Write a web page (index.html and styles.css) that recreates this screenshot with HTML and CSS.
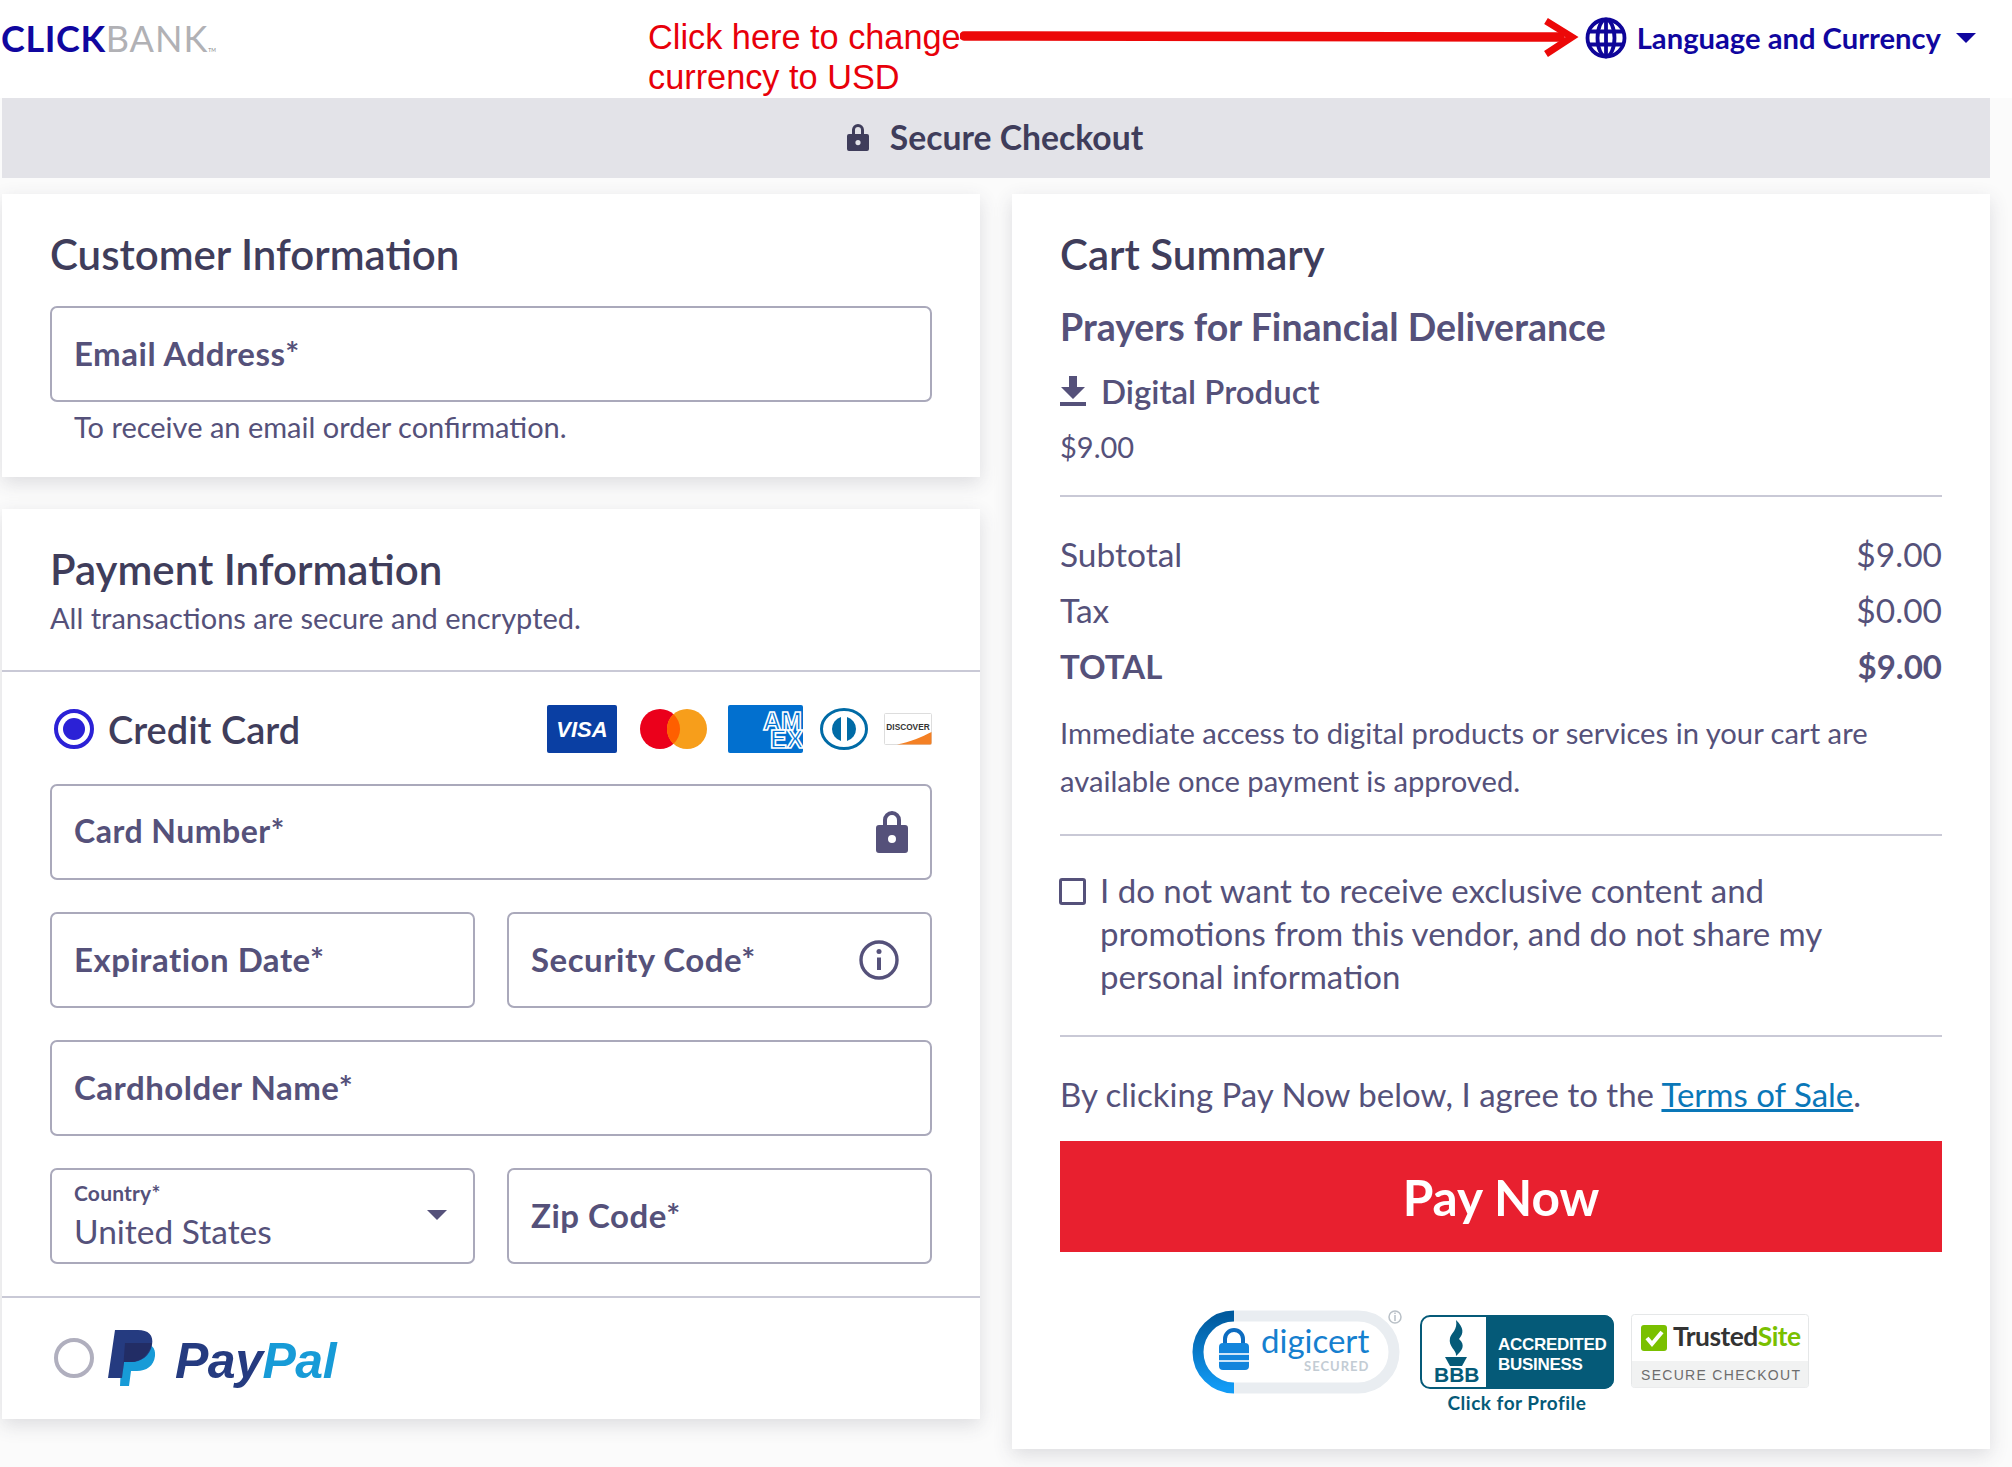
FILE: index.html
```html
<!DOCTYPE html>
<html lang="en">
<head>
<meta charset="utf-8">
<title>ClickBank Secure Checkout</title>
<link rel="stylesheet" href="styles.css">
</head>
<body>
<div class="page">
  <header class="topbar">
    <div class="logo"><span class="logo-click">CLICK</span><span class="logo-bank">BANK</span><span class="logo-tm">TM</span></div>
    <div class="note">Click here to change<br>currency to USD</div>
    <svg class="note-arrow" width="632" height="46" viewBox="0 0 632 46"><path d="M4 22 L600 23" stroke="#ec0808" stroke-width="9.500" stroke-linecap="round" fill="none"/><path d="M586 7 L612 23 L586 40" stroke="#ec0808" stroke-width="7" fill="none"/></svg>
    <div class="lang">
      <svg class="globe" width="42" height="42" viewBox="0 0 42 42" fill="none" stroke="#0f0599" stroke-width="3.800"><circle cx="21" cy="21" r="18.500"/><ellipse cx="21" cy="21" rx="8.500" ry="18.500"/><path d="M21 2.500V39.500M3.500 14.500H38.500M3.500 27.500H38.500"/></svg>
      <span class="lang-text">Language and Currency</span>
      <span class="lang-caret"></span>
    </div>
  </header>
  <div class="banner">
    <svg width="24" height="29" viewBox="0 0 24 29"><path fill="#3f3d5b" fill-rule="evenodd" d="M6 11V7a6 6 0 0 1 12 0v4h3a2 2 0 0 1 2 2v13a2 2 0 0 1-2 2H3a2 2 0 0 1-2-2V13a2 2 0 0 1 2-2zm3 0h6V7a3 3 0 0 0-6 0zm3 6a2.600 2.600 0 1 0 0 5.200a2.600 2.600 0 0 0 0-5.200z"/></svg>
    <span>Secure Checkout</span>
  </div>
  <main class="columns">
    <div class="col-left">
      <section class="card card-customer">
        <h2>Customer Information</h2>
        <div class="field field-email"><span>Email Address*</span></div>
        <p class="hint">To receive an email order confirmation.</p>
      </section>
      <section class="card card-payment">
        <div class="pay-head">
          <h2>Payment Information</h2>
          <p class="sub">All transactions are secure and encrypted.</p>
        </div>
        <div class="pay-body">
          <div class="method">
            <span class="radio radio-on"></span>
            <span class="method-label">Credit Card</span>
            <div class="brands">
              <svg class="b-visa" width="70" height="48" viewBox="0 0 70 48"><rect width="70" height="48" rx="2" fill="#0a3fa3"/><text x="35" y="32" class="t-visa">VISA</text></svg>
              <svg class="b-mc" width="67" height="40" viewBox="0 0 67 40"><circle cx="20" cy="20" r="20" fill="#eb001b"/><circle cx="47" cy="20" r="20" fill="#f79e1b"/><path d="M33.500 5.200a20 20 0 0 1 0 29.600a20 20 0 0 1 0-29.600z" fill="#ff5f00"/></svg>
              <svg class="b-amex" width="75" height="48" viewBox="0 0 75 48"><rect width="75" height="48" rx="2" fill="#0270cf"/><text x="35" y="25" class="t-amex">AM</text><text x="42" y="43" class="t-amex">EX</text></svg>
              <svg class="b-diners" width="48" height="42" viewBox="0 0 48 42"><ellipse cx="24" cy="21" rx="22.500" ry="19.500" fill="#fff" stroke="#006ba6" stroke-width="3"/><path d="M21 9a12.500 12.500 0 0 0 0 24zM27 9a12.500 12.500 0 0 1 0 24z" fill="#006ba6"/></svg>
              <svg class="b-disc" width="48" height="32" viewBox="0 0 48 32"><rect x=".5" y=".5" width="47" height="31" rx="1" fill="#fff" stroke="#ddd"/><path d="M13 31.500C26 29 38 24 47.500 19V30a1.500 1.500 0 0 1-1.500 1.500z" fill="#f48024"/><text x="24" y="17" class="t-disc">DISCOVER</text></svg>
            </div>
          </div>
          <div class="form-grid">
            <div class="field span2 field-small"><span>Card Number*</span>
              <svg class="field-icon" width="32" height="42" viewBox="0 0 32 42"><path fill="#55517a" fill-rule="evenodd" d="M7 14V9a9 9 0 0 1 18 0v5h4a3 3 0 0 1 3 3v22a3 3 0 0 1-3 3H3a3 3 0 0 1-3-3V17a3 3 0 0 1 3-3zm4 0h10V9a5 5 0 0 0-10 0zm5 10a4 4 0 1 0 0 8a4 4 0 0 0 0-8z"/></svg>
            </div>
            <div class="field"><span>Expiration Date*</span></div>
            <div class="field"><span>Security Code*</span>
              <svg class="field-icon info" width="40" height="40" viewBox="0 0 40 40" fill="none"><circle cx="20" cy="20" r="18" stroke="#55517a" stroke-width="3.400"/><path d="M20 17.500V30" stroke="#55517a" stroke-width="4"/><circle cx="20" cy="11.500" r="2.500" fill="#55517a"/></svg>
            </div>
            <div class="field span2"><span>Cardholder Name*</span></div>
            <div class="field field-select">
              <div class="select-text"><small>Country*</small><b>United States</b></div>
              <span class="select-caret"></span>
            </div>
            <div class="field"><span>Zip Code*</span></div>
          </div>
        </div>
        <div class="paypal-row">
          <span class="radio"></span>
          <svg class="pp-mark" width="48" height="56" viewBox="0 0 48 56"><path d="M14 13h20c9 0 14 5 13 13c-1 10-9 15-18 15h-6l-2 15H12z" fill="#179bd7"/><path d="M7 0h23c10 0 16 5 14 15c-2 11-11 17-21 17h-7l-2 16H0z" fill="#253b80"/><path d="M17 13h27c-2 11-11 19-21 19h-7l-1 8z" fill="#222d65"/></svg>
          <span class="pp-word"><i class="pp-pay">Pay</i><i class="pp-pal">Pal</i></span>
        </div>
      </section>
    </div>
    <section class="card card-cart">
      <h2>Cart Summary</h2>
      <h3>Prayers for Financial Deliverance</h3>
      <div class="digital">
        <svg width="26" height="30" viewBox="0 0 26 30"><path fill="#55517a" d="M9 0h8v11h8L13 23L1 11h8zM0 26h26v4H0z"/></svg>
        <span>Digital Product</span>
      </div>
      <p class="price">$9.00</p>
      <hr class="rule rule-a">
      <div class="line"><span>Subtotal</span><span>$9.00</span></div>
      <div class="line"><span>Tax</span><span>$0.00</span></div>
      <div class="line line-total"><span>TOTAL</span><span>$9.00</span></div>
      <p class="access">Immediate access to digital products or services in your cart are available once payment is approved.</p>
      <hr class="rule rule-b">
      <div class="optout">
        <span class="checkbox"></span>
        <p>I do not want to receive exclusive content and promotions from this vendor, and do not share my personal information</p>
      </div>
      <hr class="rule rule-c">
      <p class="terms">By clicking Pay Now below, I agree to the <a href="#">Terms of Sale</a>.</p>
      <button class="pay" type="button">Pay Now</button>
      <div class="badges">
        <svg class="badge-digi" width="212" height="84" viewBox="0 0 212 84">
          <defs><linearGradient id="digiring" x1="0" y1="0" x2="0" y2="1"><stop offset="0" stop-color="#005a9e"/><stop offset="1" stop-color="#129bf5"/></linearGradient></defs>
          <path d="M42 6H166a36 36 0 0 1 0 72H42" fill="none" stroke="#e9edf1" stroke-width="11"/>
          <path d="M42 6A36 36 0 0 0 42 78" fill="none" stroke="url(#digiring)" stroke-width="11"/>
          <path d="M33 33v-4a9 9 0 0 1 18 0v4" fill="none" stroke="#0d6cc0" stroke-width="4"/>
          <rect x="27" y="33" width="30" height="27" rx="4" fill="#1285dc"/>
          <path d="M27 44h30M27 51h30" stroke="#cfe6f8" stroke-width="2"/>
          <text x="69" y="43" class="t-digi">digicert</text>
          <text x="112" y="61" class="t-secured">SECURED</text>
          <circle cx="203" cy="7" r="6" fill="#fff" stroke="#b9c0c7" stroke-width="1.500"/><path d="M203 5v6M203 2.500v1.500" stroke="#b9c0c7" stroke-width="1.500"/>
        </svg>
        <div class="bbb">
          <svg width="194" height="74" viewBox="0 0 194 74">
            <rect x="1" y="1" width="192" height="72" rx="9" fill="#fff" stroke="#055a78" stroke-width="2"/>
            <path d="M66 0h118a10 10 0 0 1 10 10v54a10 10 0 0 1-10 10H66z" fill="#055a78"/>
            <path d="M36 5c8 8 8 13 3 19c7 6 3 12-3 17c1-6-8-9-6-18c1-5 8-8 6-18z" fill="#055a78"/>
            <path d="M25 42h22l-5 9h-12z" fill="#055a78"/>
            <text x="14" y="67" class="t-bbb">BBB</text>
            <text x="78" y="35" class="t-acc">ACCREDITED</text>
            <text x="78" y="55" class="t-acc">BUSINESS</text>
          </svg>
          <span>Click for Profile</span>
        </div>
        <svg class="badge-trust" width="178" height="74" viewBox="0 0 178 74">
          <rect x=".5" y=".5" width="177" height="73" rx="3" fill="#fff" stroke="#e5e7e8"/>
          <path d="M1 47h176v24a2.500 2.500 0 0 1-2.500 2.500H3.500A2.500 2.500 0 0 1 1 71z" fill="#f1f2f2"/>
          <rect x="10" y="11" width="26" height="26" rx="3" fill="#7ac000"/>
          <path d="M16 24l5 6l10-12" fill="none" stroke="#fff" stroke-width="4"/>
          <text x="42" y="32" class="t-trust">Trusted<tspan class="t-site">Site</tspan></text>
          <text x="10" y="66" class="t-check">SECURE CHECKOUT</text>
        </svg>
      </div>
    </section>
  </main>
</div>
</body>
</html>
```
FILE: styles.css
```css
* { box-sizing: border-box; }
html, body { margin: 0; padding: 0; }
body {
  background: #fbfbfb;
  font-family: "Lato", "Noto Sans", sans-serif;
  color: #55517a;
  width: 2012px;
  height: 1467px;
  overflow: hidden;
}
.page { width: 2012px; padding: 0 22px 0 2px; position: relative; }
p, h2, h3 { margin: 0; }

.topbar {
  height: 98px;
  margin-left: -2px;
  margin-right: -22px;
  background: #fff;
  display: flex;
  justify-content: space-between;
  align-items: flex-start;
  position: relative;
}
.logo { margin: 19px 0 0 1px; font-size: 36px; line-height: 38px; display: flex; font-family: "Lato", sans-serif; }
.logo-click { color: #10069f; font-weight: 700; letter-spacing: 0.6px; }
.logo-bank { color: #b1b1b5; font-weight: 400; letter-spacing: 1px; }
.logo-tm { color: #888; font-size: 5px; align-self: flex-end; line-height: 14px; letter-spacing: 0; }
.note {
  position: absolute;
  left: 648px;
  top: 17px;
  font-family: "Liberation Sans", Arial, sans-serif;
  font-size: 34.300px;
  line-height: 40px;
  color: #e8000a;
}
.note-arrow { position: absolute; left: 960px; top: 14px; }
.lang { display: flex; align-items: center; margin: 17px 36px 0 0; }
.globe { margin-right: 10px; }
.lang-text { color: #10069f; font-size: 29.200px; font-weight: 700; line-height: 42px; }
.lang-caret {
  width: 0; height: 0; margin-left: 15px;
  border-left: 10px solid transparent;
  border-right: 10px solid transparent;
  border-top: 10px solid #10069f;
}

.banner {
  height: 80px;
  background: #e3e3e8;
  display: flex;
  align-items: center;
  justify-content: center;
  gap: 20px;
  font-size: 33.700px;
  font-weight: 700;
  color: #3f3d5b;
  padding: 0 3px 2px 0;
}

.columns {
  display: grid;
  grid-template-columns: 978px 978px;
  column-gap: 32px;
  margin-top: 16px;
  align-items: start;
}
.col-left { display: flex; flex-direction: column; gap: 32px; }
.card { background: #fff; box-shadow: 0 6px 18px rgba(60, 60, 80, 0.16); }
h2 { font-size: 42px; font-weight: 600; line-height: 50px; color: #3f3d5b; }

.card-customer { height: 283px; padding: 35px 48px 0; }
.field {
  height: 96px;
  border: 2px solid #aaa9bb;
  border-radius: 7px;
  background: #fff;
  display: flex;
  align-items: center;
  justify-content: space-between;
  padding: 0 22px;
  font-size: 33px;
  letter-spacing: 0.5px;
  font-weight: 700;
  color: #55517a;
}
.field > span { margin-bottom: 3px; }
.field-email { margin-top: 27px; }
.hint { font-size: 29px; line-height: 34px; margin: 8px 0 0 24px; }

.card-payment { height: 910px; }
.pay-head { height: 163px; padding: 35px 48px 0; border-bottom: 2px solid #c9c9d6; }
.sub { font-size: 29px; line-height: 34px; margin-top: 7px; }
.pay-body { height: 626px; padding: 0 48px; border-bottom: 2px solid #c9c9d6; }
.method { height: 112px; display: flex; align-items: center; padding-top: 2px; }
.radio {
  width: 40px; height: 40px; border-radius: 50%;
  border: 4px solid #b0afbe; background: #fff; margin-left: 4px; flex: none;
}
.radio-on { border-color: #2b21d6; position: relative; }
.radio-on::after {
  content: ""; position: absolute; inset: 5px; border-radius: 50%; background: #2b21d6;
}
.method-label { font-size: 38px; font-weight: 600; margin-left: 14px; color: #3f3d5b; }
.brands { margin-left: auto; display: flex; align-items: center; }
.b-mc { margin-left: 23px; }
.b-amex { margin-left: 21px; }
.b-diners { margin-left: 17px; }
.b-disc { margin-left: 16px; }
.t-visa { font: italic 900 22px "Liberation Sans", sans-serif; fill: #fff; text-anchor: middle; }
.t-amex { font: 700 25px "Liberation Sans", sans-serif; fill: #0270cf; stroke: #fff; stroke-width: 1.600px; }
.t-disc { font: 700 8.300px "Liberation Sans", sans-serif; fill: #333; text-anchor: middle; }

.form-grid {
  display: grid;
  grid-template-columns: 425px 425px;
  column-gap: 32px;
  row-gap: 32px;
}
.span2 { grid-column: span 2; }
.field-small { font-size: 32px; }
.field-icon { letter-spacing: 0; }
.field-icon.info { margin-right: 9px; }
.field-select { padding-right: 26px; }
.select-text { display: flex; flex-direction: column; }
.select-text small { font-size: 21px; line-height: 24px; font-weight: 700; letter-spacing: 0.2px; }
.select-text b { font-size: 33.500px; line-height: 40px; margin-top: 6px; font-weight: 400; letter-spacing: 0; }
.select-caret {
  width: 0; height: 0;
  border-left: 10px solid transparent;
  border-right: 10px solid transparent;
  border-top: 10px solid #55517a;
}

.paypal-row { height: 120px; padding: 0 48px; display: flex; align-items: center; }
.pp-mark { margin-left: 14px; }
.pp-word { font: italic 700 50px "Liberation Sans", sans-serif; margin-left: 19px; margin-top: 6px; letter-spacing: -0.5px; }
.pp-word i { font-style: italic; }
.pp-pay { color: #253b80; }
.pp-pal { color: #179bd7; }

.card-cart { height: 1255px; padding: 35px 48px 0; }
h3 { font-size: 37.500px; font-weight: 700; line-height: 44px; margin-top: 26px; color: #55517a; }
.digital { display: flex; align-items: center; gap: 15px; font-size: 33px; font-weight: 600; margin-top: 20px; line-height: 44px; }
.digital svg { flex: none; }
.price { font-size: 29px; line-height: 36px; margin-top: 16px; }
.rule { border: 0; height: 2px; background: #c9c9d6; margin: 0; }
.rule-a { margin-top: 30px; }
.line { display: flex; justify-content: space-between; font-size: 33.500px; line-height: 56px; }
.rule-a + .line { margin-top: 29px; }
.line-total { font-weight: 700; font-size: 33px; }
.access { font-size: 29.200px; line-height: 48px; margin-top: 15px; }
.rule-b { margin-top: 29px; }
.optout { display: flex; gap: 14px; margin-top: 33px; width: 800px; margin-left: -1px; }
.checkbox { width: 27px; height: 27px; border: 3px solid #55517a; border-radius: 3px; flex: none; margin-top: 9px; }
.optout p { font-size: 33px; line-height: 43px; width: 745px; }
.rule-c { margin-top: 37px; }
.terms { font-size: 33px; line-height: 44px; margin-top: 35px; }
.terms a { color: #0a77b8; }
.pay {
  display: block; width: 100%; height: 111px; margin-top: 25px; border: 0; background: #e8202f;
  color: #fff; font: 700 49.600px "Lato", sans-serif;
}
.badges { display: flex; align-items: flex-start; margin: 58px 0 0 132px; }
.badge-digi { flex: none; }
.bbb { margin: 5px 0 0 16px; display: flex; flex-direction: column; align-items: center; width: 194px; }
.bbb svg { display: block; }
.bbb span { font-size: 19px; font-weight: 700; color: #055a78; line-height: 22px; margin-top: 3px; letter-spacing: 0.5px; }
.badge-trust { margin: 4px 0 0 17px; flex: none; }
.t-digi { font: 400 33px "Lato", sans-serif; fill: #1680cf; }
.t-secured { font: 700 13px "Lato", sans-serif; fill: #c3ccd4; letter-spacing: 1px; }
.t-bbb { font: 700 21px "Liberation Sans", sans-serif; fill: #055a78; }
.t-acc { font: 700 17px "Liberation Sans", sans-serif; fill: #fff; letter-spacing: -0.3px; }
.t-trust { font: 700 26.400px "Lato", sans-serif; fill: #333; letter-spacing: -0.5px; }
.t-site { fill: #7ac000; }
.t-check { font: 400 14px "Liberation Sans", sans-serif; fill: #6d6d6d; letter-spacing: 1.300px; }
```
